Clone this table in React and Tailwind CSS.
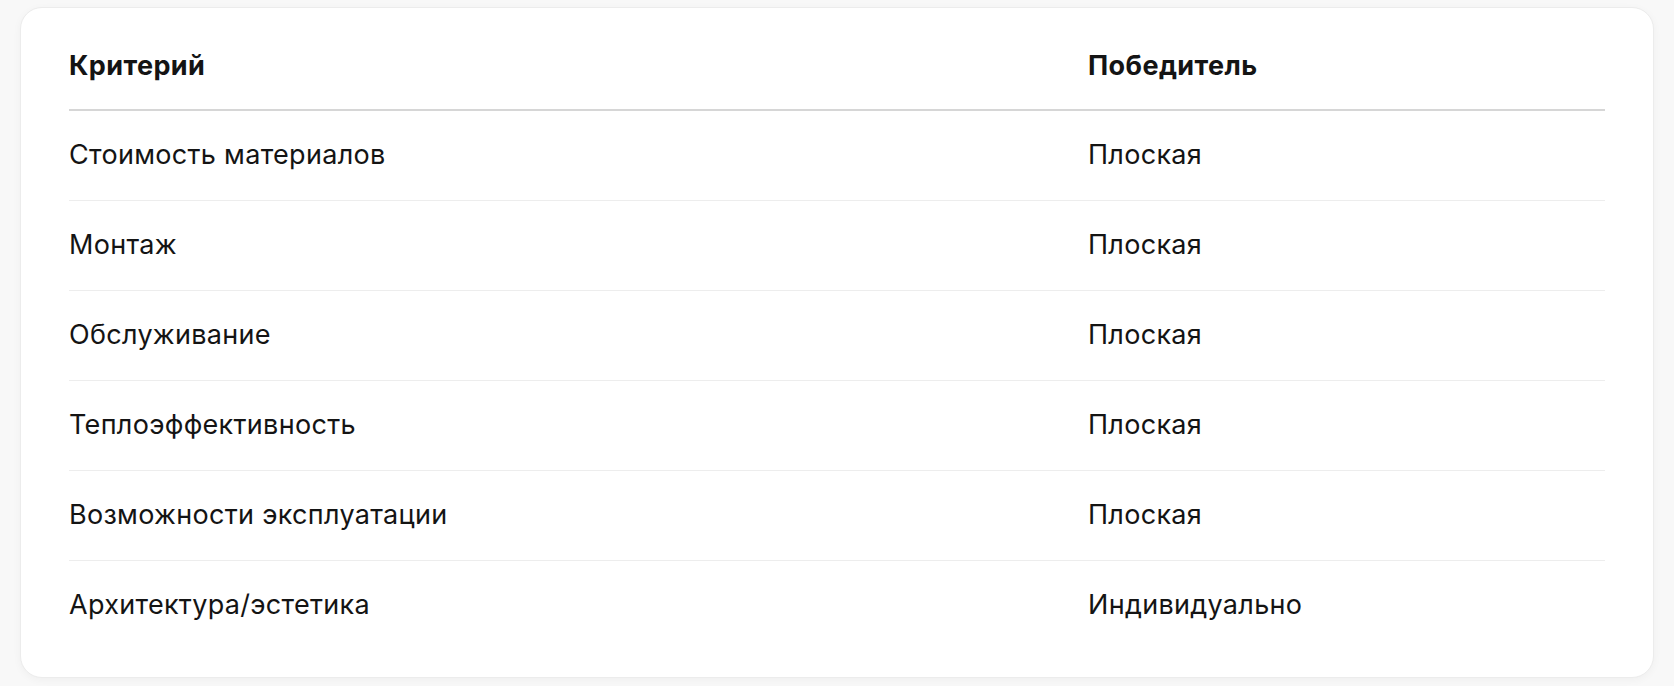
import React from 'react';

const rows = [
  ['Стоимость материалов', 'Плоская'],
  ['Монтаж', 'Плоская'],
  ['Обслуживание', 'Плоская'],
  ['Теплоэффективность', 'Плоская'],
  ['Возможности эксплуатации', 'Плоская'],
  ['Архитектура/эстетика', 'Индивидуально'],
];

function App() {
  return (
    <div
      className="min-h-[686px] bg-[#f8f8f8] pt-[7px] px-[20px] pb-[8px] text-[#141414]"
      style={{ fontFamily: 'Inter, "Noto Sans", sans-serif' }}
    >
      <div className="bg-white rounded-[22px] border border-[#ececec] shadow-[0_2px_8px_rgba(0,0,0,0.04)] px-[48px] pt-[15px] pb-[27px]">
        <table className="w-full border-collapse text-left">
          <colgroup>
            <col className="w-[1019px]" />
            <col />
          </colgroup>
          <thead>
            {/* header */}
            <tr className="border-b-2 border-[#d6d6d6]">
              <th className="h-[87px] align-middle font-bold text-[27px] tracking-[0.4px]">Критерий</th>
              <th className="h-[87px] align-middle font-bold text-[27px] tracking-[0.4px]">Победитель</th>
            </tr>
          </thead>
          <tbody>
            {rows.map((r, i) => (
              <tr key={i} className={i < rows.length - 1 ? 'border-b border-[#ededed]' : ''}>
                <td className="h-[90px] align-middle text-[27px] tracking-[0.3px]">{r[0]}</td>
                <td className="h-[90px] align-middle text-[27px] tracking-[0.3px]">{r[1]}</td>
              </tr>
            ))}
          </tbody>
        </table>
      </div>
    </div>
  );
}

export default App;
